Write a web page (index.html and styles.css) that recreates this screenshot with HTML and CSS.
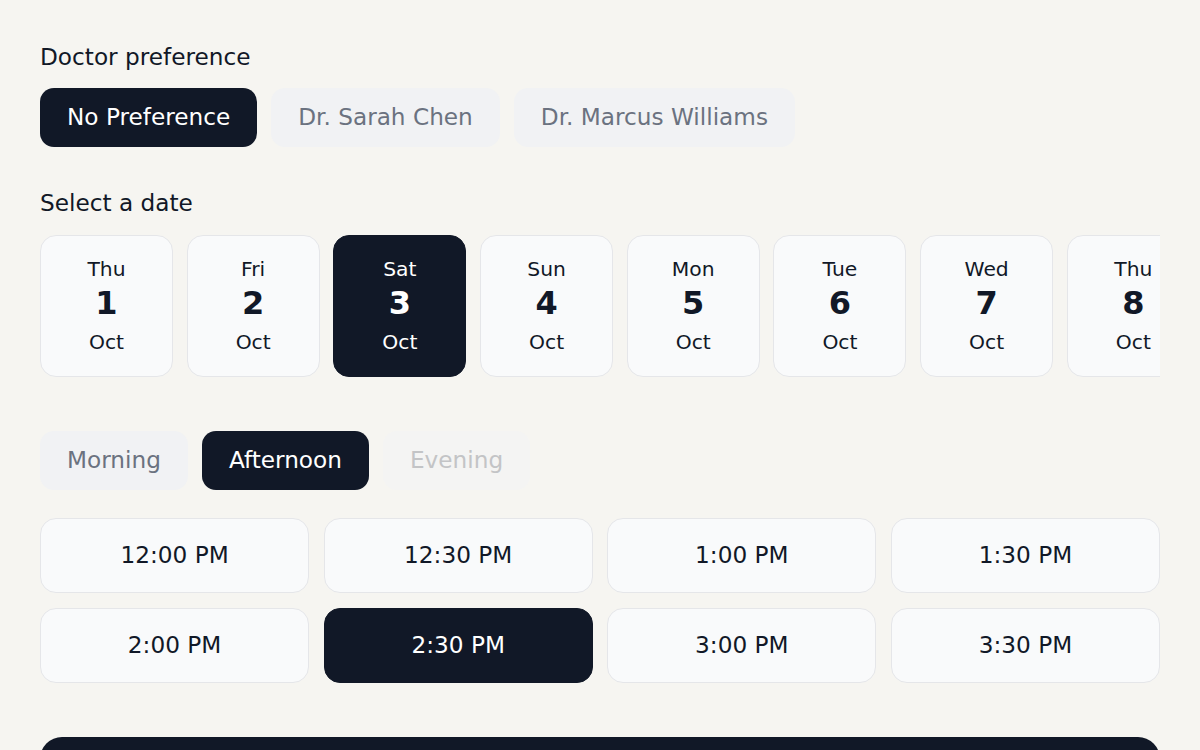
FILE: index.html
```html
<!DOCTYPE html>
<html lang="en">
<head>
<meta charset="utf-8">
<title>Book appointment</title>
<link rel="stylesheet" href="styles.css">
</head>
<body>
<main class="booking">
  <section class="section">
    <h2 class="label">Doctor preference</h2>
    <div class="chips">
      <button class="chip chip-active">No Preference</button>
      <button class="chip">Dr. Sarah Chen</button>
      <button class="chip">Dr. Marcus Williams</button>
    </div>
  </section>

  <section class="section section-dates">
    <h2 class="label">Select a date</h2>
    <div class="dates">
      <button class="date"><span class="dow">Thu</span><span class="day">1</span><span class="mon">Oct</span></button>
      <button class="date"><span class="dow">Fri</span><span class="day">2</span><span class="mon">Oct</span></button>
      <button class="date date-active"><span class="dow">Sat</span><span class="day">3</span><span class="mon">Oct</span></button>
      <button class="date"><span class="dow">Sun</span><span class="day">4</span><span class="mon">Oct</span></button>
      <button class="date"><span class="dow">Mon</span><span class="day">5</span><span class="mon">Oct</span></button>
      <button class="date"><span class="dow">Tue</span><span class="day">6</span><span class="mon">Oct</span></button>
      <button class="date"><span class="dow">Wed</span><span class="day">7</span><span class="mon">Oct</span></button>
      <button class="date"><span class="dow">Thu</span><span class="day">8</span><span class="mon">Oct</span></button>
      <button class="date"><span class="dow">Fri</span><span class="day">9</span><span class="mon">Oct</span></button>
      <button class="date"><span class="dow">Sat</span><span class="day">10</span><span class="mon">Oct</span></button>
      <button class="date"><span class="dow">Sun</span><span class="day">11</span><span class="mon">Oct</span></button>
      <button class="date"><span class="dow">Mon</span><span class="day">12</span><span class="mon">Oct</span></button>
      <button class="date"><span class="dow">Tue</span><span class="day">13</span><span class="mon">Oct</span></button>
      <button class="date"><span class="dow">Wed</span><span class="day">14</span><span class="mon">Oct</span></button>
    </div>
  </section>

  <section class="section section-times">
    <div class="chips">
      <button class="chip">Morning</button>
      <button class="chip chip-active">Afternoon</button>
      <button class="chip chip-disabled" disabled>Evening</button>
    </div>
    <div class="times">
      <button class="time">12:00 PM</button>
      <button class="time">12:30 PM</button>
      <button class="time">1:00 PM</button>
      <button class="time">1:30 PM</button>
      <button class="time">2:00 PM</button>
      <button class="time time-active">2:30 PM</button>
      <button class="time">3:00 PM</button>
      <button class="time">3:30 PM</button>
    </div>
  </section>

  <button class="submit">Confirm Appointment</button>
</main>
</body>
</html>
```

FILE: styles.css
```css
* {
  box-sizing: border-box;
}

html, body {
  margin: 0;
  padding: 0;
}

body {
  background: #f6f5f1;
  font-family: "DejaVu Sans", "Liberation Sans", sans-serif;
  color: #111827;
  font-size: 23.2px;
  overflow: hidden;
}

.booking {
  padding: 41px 40px 0;
  display: flex;
  flex-direction: column;
}

.section {
  display: flex;
  flex-direction: column;
}

.section-dates {
  margin-top: 40px;
}

.section-times {
  margin-top: 54px;
}

.label {
  margin: 0 0 15px;
  font-size: 23.2px;
  font-weight: normal;
  line-height: 32px;
  color: #111827;
}

.section-dates .label {
  margin-bottom: 16px;
}

.chips {
  display: flex;
  gap: 14px;
}

button {
  font-family: inherit;
  cursor: pointer;
}

.chip {
  border: none;
  border-radius: 14px;
  background: #f1f2f4;
  color: #6b7280;
  font-size: 23.2px;
  line-height: 35px;
  padding: 11px 27px 13px;
}

.chip-active {
  background: #111827;
  color: #ffffff;
}

.chip-disabled {
  background: #f4f4f3;
  color: #c3c4c6;
  cursor: default;
}

.dates {
  display: flex;
  gap: 13.7px;
  overflow: hidden;
}

.date {
  flex: 0 0 133px;
  height: 142px;
  border: 1.5px solid #e5e6e9;
  border-radius: 16px;
  background: #f9fafb;
  color: #111827;
  padding: 20px 0 0;
  display: flex;
  flex-direction: column;
  align-items: center;
}

.date-active {
  background: #111827;
  border-color: #111827;
  color: #ffffff;
}

.dow, .mon {
  font-size: 20.3px;
  line-height: 26px;
}

.day {
  font-size: 32px;
  font-weight: bold;
  line-height: 38px;
  margin-top: 2px;
  margin-bottom: 7px;
}

.times {
  margin-top: 28px;
  display: grid;
  grid-template-columns: repeat(4, 1fr);
  gap: 15px 14.5px;
}

.time {
  height: 75px;
  border: 1.5px solid #e5e6e9;
  border-radius: 16px;
  background: #f9fafb;
  color: #111827;
  font-size: 23.2px;
  line-height: 35px;
  padding: 0 0 2px;
}

.time-active {
  background: #111827;
  border-color: #111827;
  color: #ffffff;
}

.submit {
  margin-top: 54px;
  height: 76px;
  border: none;
  border-radius: 22px;
  background: #111827;
  color: #ffffff;
  font-size: 23.2px;
}
```
